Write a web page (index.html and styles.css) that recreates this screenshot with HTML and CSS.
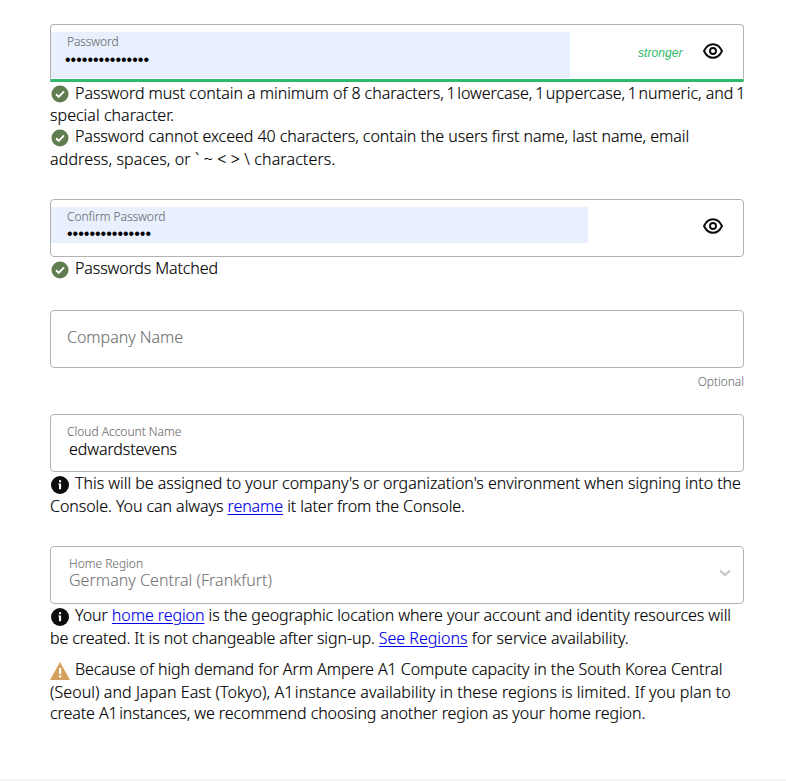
FILE: index.html
```
<!DOCTYPE html>
<html lang="en">
<head>
<meta charset="utf-8">
<title>Account Information</title>
<link rel="stylesheet" href="styles.css">
</head>
<body>
<svg width="0" height="0" class="defs">
  <symbol id="eye" viewBox="0 0 20 16"><path d="M1 8C3 3.700 6.100 1.200 10 1.200S17 3.700 19 8C17 12.300 13.900 14.800 10 14.800S3 12.300 1 8Z" fill="none" stroke="#0b0b0b" stroke-width="1.900"/><circle cx="10" cy="8" r="3" fill="none" stroke="#0b0b0b" stroke-width="1.900"/></symbol>
  <symbol id="check" viewBox="0 0 18 18"><circle cx="9" cy="9" r="8.500" fill="#5f7d4f"/><path d="M5 9.300 7.700 11.800 13 6.300" fill="none" stroke="#fff" stroke-width="1.900"/></symbol>
  <symbol id="info" viewBox="0 0 18 18"><circle cx="9" cy="9" r="9" fill="#0d0d0d"/><path d="M8 4.300h2.100v2H8zM7.200 7.400h2.900v5.800H8V8.600h-.8z" fill="#fff"/></symbol>
  <symbol id="warn" viewBox="0 0 20 18"><path d="M10 0 20 18H0Z" fill="#d4a05c"/><path d="M9 6h2.200v6H9zM9 13.300h2.200v2.200H9z" fill="#fff"/></symbol>
</svg>
<main class="form">
  <section class="group password">
    <div class="field strong">
      <div class="fill"><label class="label">Password</label><div class="dots">•••••••••••••••</div></div>
      <span class="strength">stronger</span>
      <svg class="eye"><use href="#eye"/></svg>
    </div>
    <p class="line first l1"><svg class="icon"><use href="#check"/></svg>Password must contain a minimum of 8 characters,<span class="tight"> 1 </span>lowercase,<span class="tight"> 1 </span>uppercase,<span class="tight"> 1 </span>numeric, and<span class="tight"> 1</span></p>
    <p class="line short l2">special character.</p>
    <p class="line first tall l3"><svg class="icon"><use href="#check"/></svg>Password cannot exceed 40 characters, contain the users first name, last name, email</p>
    <p class="line l4">address, spaces, or ` ~ &lt; &gt; \ characters.</p>
  </section>
  <section class="group confirm">
    <div class="field">
      <div class="fill"><label class="label">Confirm Password</label><div class="dots">•••••••••••••••</div></div>
      <svg class="eye"><use href="#eye"/></svg>
    </div>
    <p class="line first m1"><svg class="icon"><use href="#check"/></svg>Passwords Matched</p>
  </section>
  <section class="group company">
    <div class="field"><label class="placeholder">Company Name</label></div>
    <div class="optional">Optional</div>
  </section>
  <section class="group account">
    <div class="field"><div class="stack"><label class="label">Cloud Account Name</label><div class="value">edwardstevens</div></div></div>
    <p class="line first tall t1"><svg class="icon"><use href="#info"/></svg>This will be assigned to your company's or organization's environment when signing into the</p>
    <p class="line t2">Console. You can always <a href="#">rename</a> it later from the Console.</p>
  </section>
  <section class="group region">
    <div class="field"><div class="stack"><label class="label">Home Region</label><div class="value">Germany Central (Frankfurt)</div></div>
      <svg class="chevron" viewBox="0 0 12 8"><path d="M1 1.500 6 6.200 11 1.500" fill="none" stroke="#c9c9c9" stroke-width="2.300"/></svg></div>
    <p class="line first tall h1"><svg class="icon"><use href="#info"/></svg>Your <a href="#">home region</a> is the geographic location where your account and identity resources will</p>
    <p class="line h2"><span class="lead">be created. It is not changeable after sign-up. </span><a href="#">See Regions</a> for service availability.</p>
    <div class="warning">
      <p class="line first tall w1"><svg class="icon wide"><use href="#warn"/></svg>Because of high demand for Arm Ampere A1 Compute capacity in the South Korea Central</p>
      <p class="line short w2">(Seoul) and Japan East (Tokyo), A<span class="tight">1 </span>instance availability in these regions is limited. If you plan to</p>
      <p class="line w3">create A<span class="tight">1 </span>instances, we recommend choosing another region as your home region.</p>
    </div>
  </section>
</main>
<footer class="footer"></footer>
</body>
</html>
```
FILE: styles.css
```
* { box-sizing: border-box; }
body {
  margin: 0;
  height: 781px;
  display: flex;
  flex-direction: column;
  overflow: hidden;
  background: #fff;
  color: #000;
  font: 300 16px/22px "Noto Sans", sans-serif;
  -webkit-text-stroke: 0.15px;
}
.defs { position: absolute; }
.form { width: 694px; margin: 24px 0 0 50px; flex: 1; }
.group.password { height: 175px; }
.group.confirm { height: 111px; }
.group.company { height: 104px; }
.group.account { height: 132px; }
.field {
  display: flex;
  height: 58px;
  border: 1px solid #b3b3b3;
  border-radius: 4px;
  padding-top: 7px;
}
.field.strong { border-bottom: 3px solid #2dba6b; border-bottom-left-radius: 1px; border-bottom-right-radius: 1px; }
.fill { background: #e8f0fe; width: 537px; height: 36px; padding: 1px 0 0 16px; }
.strong .fill { width: 519px; height: 46px; }
.label { display: block; font-size: 12px; line-height: 18px; color: #6f6f6f; letter-spacing: -0.02px; -webkit-text-stroke: 0.1px; }
.strong .label { letter-spacing: -0.1px; }
.confirm .label { letter-spacing: -0.04px; }
.dots { font: 400 16px/16px "Liberation Sans", sans-serif; color: #000; -webkit-text-stroke: 0; }
.strong .dots { margin-left: -2px; line-height: 18px; }
.strength { margin: 11px 0 0 68px; width: 46px; font: italic 400 12px/20px "Liberation Sans", sans-serif; letter-spacing: 0.05px; color: #2dba6b; -webkit-text-stroke: 0; }
.eye { width: 20px; height: 16px; margin: 11px 20.500px 0 auto; }
.placeholder { color: #757575; margin: 8px 0 0 16px; letter-spacing: -0.04px; }
.optional { text-align: right; font-size: 12px; line-height: 28px; color: #757575; letter-spacing: -0.05px; -webkit-text-stroke: 0.1px; }
.stack { padding: 1px 0 0 16px; }
.account .value { margin: -3px 0 0 2px; letter-spacing: -0.09px; }
.region .stack { padding-left: 18px; color: #757575; }
.region .value { margin-top: -4px; letter-spacing: 0.03px; -webkit-text-stroke: 0.1px; }
.chevron { width: 12px; height: 8px; margin: 15px 12px 0 auto; }
.line { margin: 0; height: 22px; white-space: pre; }
.short { height: 21px; }
.tall { height: 23px; }
.first { display: flow-root; }
.icon { width: 18px; height: 18px; margin: 4px 6px 0 1px; float: left; }
.l1 .icon { margin-top: 3px; }
.icon.wide { width: 20px; margin: 4px 5px 0 0; }
.tight { letter-spacing: -1.350px; }
a { color: #0000ee; text-decoration-thickness: 1px; text-underline-offset: 2px; }
.l1 { letter-spacing: -0.04px; }
.l2 { letter-spacing: 0.02px; }
.l3 { letter-spacing: -0.05px; }
.l4 { letter-spacing: 0.12px; }
.m1 { letter-spacing: -0.12px; }
.t1 { letter-spacing: -0.035px; }
.t2 { letter-spacing: -0.07px; }
.h1 { letter-spacing: -0.073px; }
.h2 { letter-spacing: 0; }
.h2 .lead { letter-spacing: -0.1px; }
.w1 { letter-spacing: -0.07px; }
.w2 { letter-spacing: 0.06px; }
.w3 { letter-spacing: -0.08px; }
.warning { margin-top: 9px; }
.footer { height: 2px; background: #f5f5f5; }
```
